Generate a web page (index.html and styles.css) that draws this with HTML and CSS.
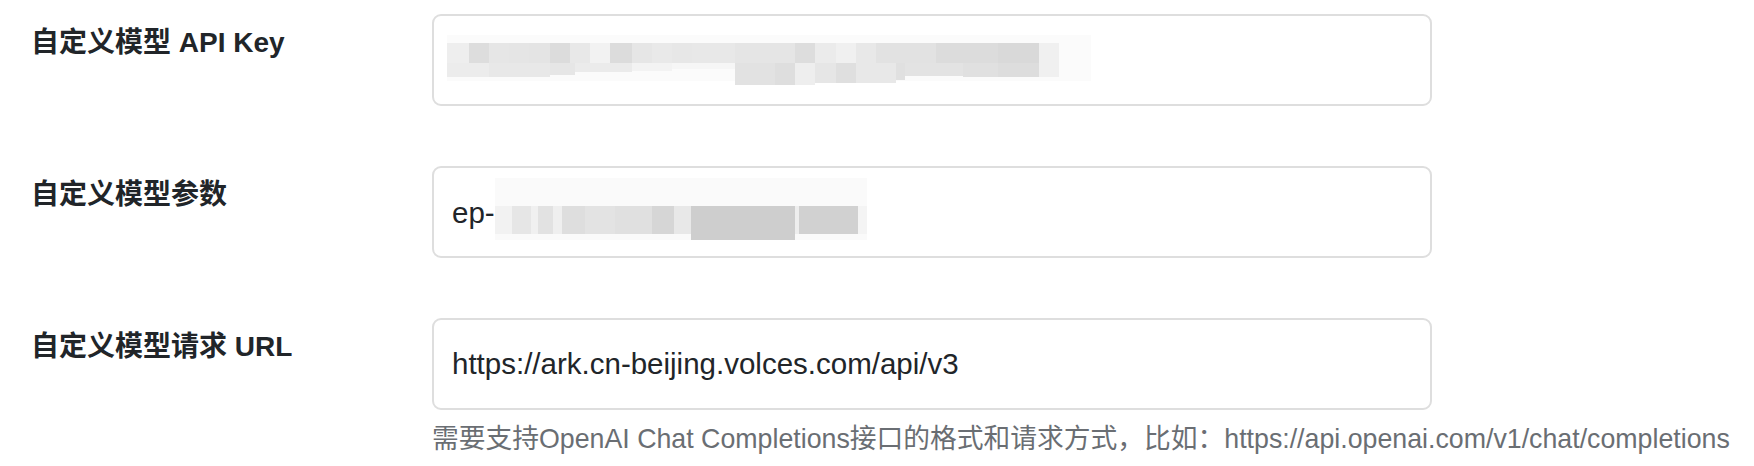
FILE: index.html
```html
<!DOCTYPE html>
<html lang="zh-CN">
<head>
<meta charset="utf-8">
<title>自定义模型设置</title>
<link rel="stylesheet" href="styles.css">
</head>
<body>
<form class="settings">
  <div class="row">
    <label class="label">自定义模型 API Key</label>
    <div class="field">
      <div class="control">
        <svg class="mosaic mosaic-key" width="650" height="52" viewBox="0 0 650 52" aria-hidden="true">
          <rect x="0" y="0" width="644" height="46" fill="#fbfbfb"/>
          <rect x="0" y="8" width="22" height="20" fill="#eeeeee"/>
          <rect x="22" y="8" width="20" height="20" fill="#dddddd"/>
          <rect x="42" y="8" width="20" height="20" fill="#e6e6e6"/>
          <rect x="62" y="8" width="20" height="20" fill="#e5e5e5"/>
          <rect x="82" y="8" width="21" height="20" fill="#e4e4e4"/>
          <rect x="103" y="8" width="20" height="20" fill="#dcdcdc"/>
          <rect x="123" y="8" width="20" height="20" fill="#e8e8e8"/>
          <rect x="143" y="8" width="20" height="20" fill="#f2f2f2"/>
          <rect x="163" y="8" width="22" height="20" fill="#dcdcdc"/>
          <rect x="185" y="8" width="20" height="20" fill="#e6e6e6"/>
          <rect x="205" y="8" width="20" height="20" fill="#e9e9e9"/>
          <rect x="225" y="8" width="20" height="20" fill="#e7e7e7"/>
          <rect x="245" y="8" width="43" height="20" fill="#e8e8e8"/>
          <rect x="288" y="8" width="60" height="20" fill="#e5e5e5"/>
          <rect x="348" y="8" width="20" height="20" fill="#dddddd"/>
          <rect x="368" y="8" width="21" height="20" fill="#ebebeb"/>
          <rect x="389" y="8" width="20" height="20" fill="#f0f0f0"/>
          <rect x="409" y="8" width="20" height="20" fill="#e8e8e8"/>
          <rect x="429" y="8" width="60" height="20" fill="#e2e2e2"/>
          <rect x="489" y="8" width="62" height="20" fill="#dcdcdc"/>
          <rect x="551" y="8" width="41" height="20" fill="#d9d9d9"/>
          <rect x="592" y="8" width="20" height="20" fill="#f0f0f0"/>

          <rect x="0" y="28" width="42" height="14" fill="#ececec"/>
          <rect x="42" y="28" width="61" height="14" fill="#e8e8e8"/>
          <rect x="103" y="28" width="25" height="12" fill="#e6e6e6"/>
          <rect x="128" y="28" width="57" height="9" fill="#ebebeb"/>
          <rect x="185" y="28" width="40" height="8" fill="#f3f3f3"/>
          <rect x="225" y="28" width="63" height="6" fill="#f6f6f6"/>
          <rect x="288" y="28" width="40" height="22" fill="#e2e2e2"/>
          <rect x="328" y="28" width="20" height="22" fill="#dedede"/>
          <rect x="348" y="28" width="20" height="22" fill="#eeeeee"/>
          <rect x="368" y="28" width="21" height="20" fill="#e6e6e6"/>
          <rect x="389" y="28" width="20" height="20" fill="#dfdfdf"/>
          <rect x="409" y="28" width="40" height="20" fill="#e8e8e8"/>
          <rect x="449" y="28" width="9" height="17" fill="#e0e0e0"/>
          <rect x="458" y="28" width="58" height="13" fill="#e3e3e3"/>
          <rect x="516" y="28" width="35" height="14" fill="#e0e0e0"/>
          <rect x="551" y="28" width="41" height="14" fill="#dddddd"/>
          <rect x="592" y="28" width="20" height="14" fill="#f0f0f0"/>
        </svg>
      </div>
    </div>
  </div>

  <div class="row">
    <label class="label">自定义模型参数</label>
    <div class="field">
      <div class="control">
        <span class="value">ep-</span>
        <svg class="mosaic mosaic-ep" width="372" height="66" viewBox="0 0 372 66" aria-hidden="true">
          <rect x="0" y="0" width="372" height="62" fill="#fafafa"/>
          <rect x="0" y="28" width="17" height="28" fill="#f2f2f2"/>
          <rect x="17" y="28" width="19" height="28" fill="#e6e6e6"/>
          <rect x="36" y="28" width="7" height="28" fill="#f0f0f0"/>
          <rect x="43" y="28" width="15" height="28" fill="#e2e2e2"/>
          <rect x="58" y="28" width="9" height="28" fill="#efefef"/>
          <rect x="67" y="28" width="23" height="28" fill="#dedede"/>
          <rect x="90" y="28" width="30" height="28" fill="#e3e3e3"/>
          <rect x="120" y="28" width="37" height="28" fill="#e0e0e0"/>
          <rect x="157" y="28" width="22" height="28" fill="#d6d6d6"/>
          <rect x="179" y="28" width="17" height="28" fill="#e8e8e8"/>
          <rect x="196" y="28" width="104" height="34" fill="#cecece"/>
          <rect x="300" y="28" width="4" height="28" fill="#eeeeee"/>
          <rect x="304" y="28" width="59" height="28" fill="#d1d1d1"/>
          <rect x="363" y="28" width="9" height="28" fill="#f4f4f4"/>
        </svg>
      </div>
    </div>
  </div>

  <div class="row">
    <label class="label" for="url">自定义模型请求 URL</label>
    <div class="field">
      <input id="url" class="control input" type="text" value="https://ark.cn-beijing.volces.com/api/v3">
      <p class="help">需要支持OpenAI Chat Completions接口的格式和请求方式，比如：https://api.openai.com/v1/chat/completions</p>
    </div>
  </div>
</form>
</body>
</html>
```

FILE: styles.css
```css
* {
  box-sizing: border-box;
}

html, body {
  margin: 0;
  padding: 0;
  background: #ffffff;
}

body {
  font-family: "Liberation Sans", "Noto Sans CJK SC", sans-serif;
  color: #212529;
}

.settings {
  display: flex;
  flex-direction: column;
  gap: 60px;
  padding: 14px 0 0 31px;
}

.row {
  display: flex;
  align-items: flex-start;
}

.label {
  width: 401px;
  flex: none;
  font-size: 28px;
  font-weight: 700;
  line-height: 42px;
  padding-top: 8px;
  color: #212529;
}

.field {
  width: 1000px;
  flex: none;
}

.control {
  display: flex;
  align-items: center;
  width: 1000px;
  height: 92px;
  border: 2px solid #dedede;
  border-radius: 9px;
  padding: 0 18px;
  background: #ffffff;
  font-family: "Liberation Sans", "Noto Sans CJK SC", sans-serif;
  font-size: 29.5px;
  color: #212529;
  overflow: hidden;
}

.input {
  padding-top: 0;
  outline: none;
}

.value {
  padding-top: 2px;
}

.mosaic {
  display: block;
  flex: none;
}

.mosaic-key {
  align-self: flex-start;
  margin-left: -5px;
  margin-top: 19px;
}

.mosaic-ep {
  align-self: flex-start;
  margin-top: 10px;
}

.help {
  margin: 10px 0 0 0;
  white-space: nowrap;
  font-size: 26.75px;
  line-height: 39px;
  color: #6a6e73;
}
```
